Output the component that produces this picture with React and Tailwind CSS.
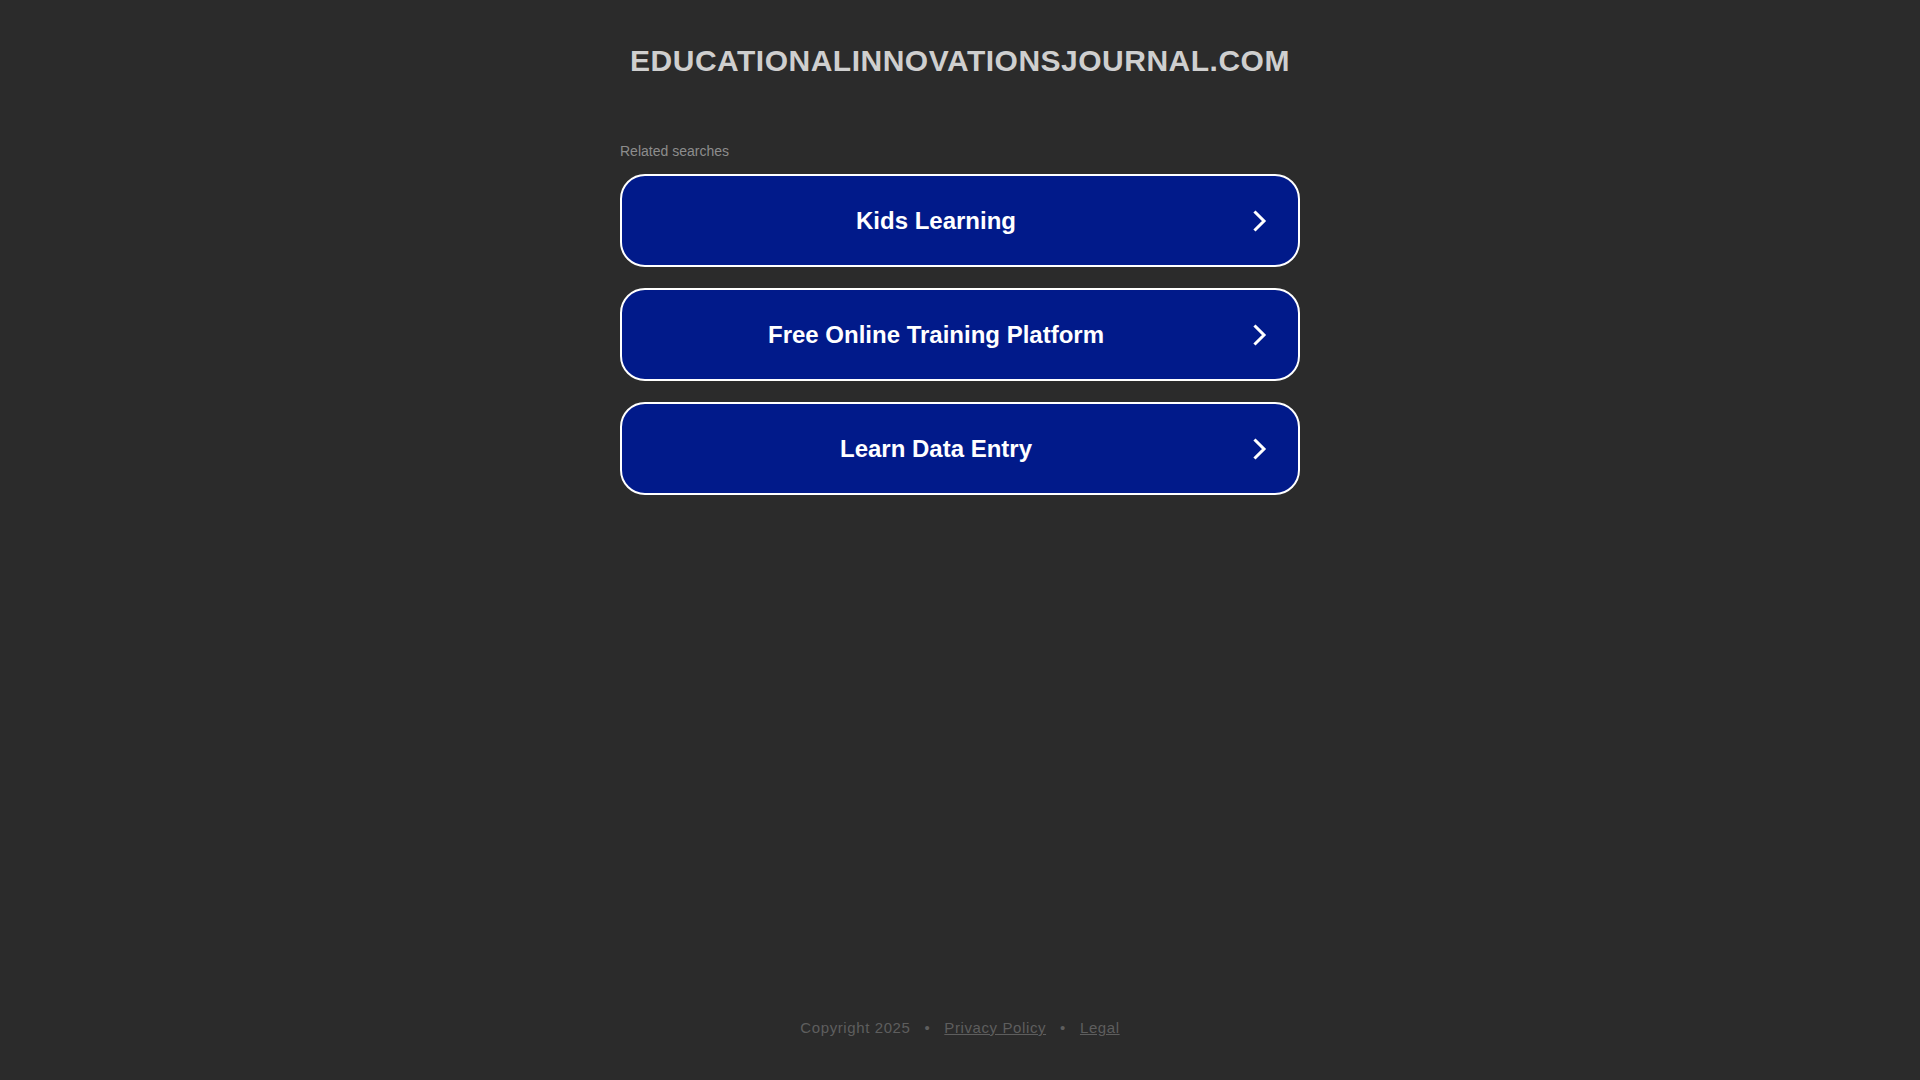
import React from 'react';

const SEARCHES = ['Kids Learning', 'Free Online Training Platform', 'Learn Data Entry'];

function Chevron() {
  return (
    <svg width="14" height="22" viewBox="0 0 14 22" fill="none" className="shrink-0">
      <polyline points="2.5,2.5 11,11 2.5,19.5" stroke="#ffffff" strokeWidth="3" strokeLinecap="square" strokeLinejoin="miter" />
    </svg>
  );
}

export default function App() {
  return (
    <div className="min-h-screen bg-[#2b2b2b] flex flex-col items-center font-['Liberation_Sans',Arial,sans-serif]">
      <h1 className="pt-[44px] text-[30px] leading-[34px] font-bold tracking-[0.5px] text-[#cfcfcf]">
        EDUCATIONALINNOVATIONSJOURNAL.COM
      </h1>

      <div className="w-[680px] mt-[64px]">
        <p className="text-[14px] leading-[18px] text-[#8d8d8d] mb-[14px]">Related searches</p>
        <div className="flex flex-col gap-[21px]">
          {SEARCHES.map((s) => (
            <a
              key={s}
              href="#"
              className="h-[93px] flex items-center rounded-[25px] border-2 border-white bg-[#011a8a] pl-[32px] pr-[31px]"
            >
              <span className="flex-1 text-center text-[24px] font-bold text-white pr-[35px]">{s}</span>
              <Chevron />
            </a>
          ))}
        </div>
      </div>

      <footer className="mt-auto pb-[43px] text-[15px] leading-[18px] tracking-[0.6px] text-[#5e5e5e] flex items-center gap-[14px]">
        <span>Copyright 2025</span>
        <span>•</span>
        <a href="#" className="underline">Privacy Policy</a>
        <span>•</span>
        <a href="#" className="underline">Legal</a>
      </footer>
    </div>
  );
}
